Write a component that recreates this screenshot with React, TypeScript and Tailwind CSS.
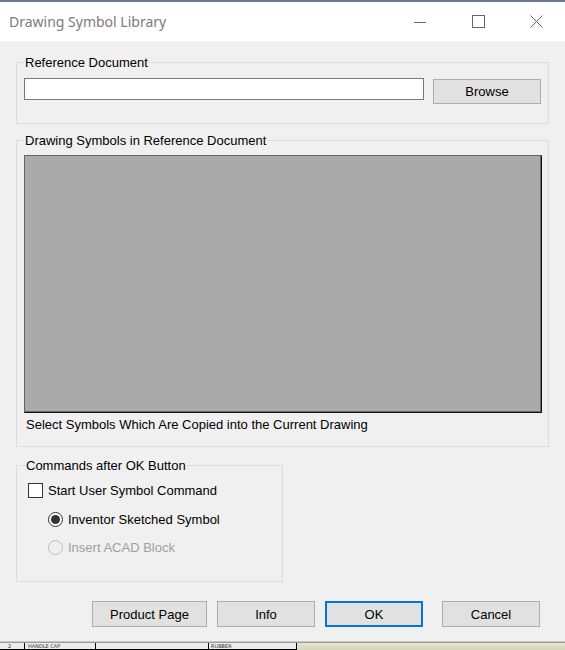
import React from 'react'

function Radio({ checked, disabled }: { checked?: boolean; disabled?: boolean }) {
  return (
    <span
      className={
        'w-[15px] h-[15px] rounded-full border flex items-center justify-center shrink-0 ' +
        (disabled ? 'border-[#bcbcbc] bg-[#f0f0f0]' : 'border-[#333333] bg-white')
      }
    >
      {checked && <span className="w-[9px] h-[9px] rounded-full bg-[#333333]" />}
    </span>
  )
}

function WinButton({ label, width, primary }: { label: string; width: string; primary?: boolean }) {
  return (
    <button
      className={
        'h-[26px] bg-[#e1e1e1] text-black leading-none ' +
        width +
        (primary ? ' border-2 border-[#0078d7]' : ' border border-[#adadad]')
      }
    >
      {label}
    </button>
  )
}

export default function App() {
  return (
    <div className="w-[565px] h-[650px] flex flex-col bg-[#f0f0f0] font-['Liberation_Sans',Arial,sans-serif] text-[13px] text-black overflow-hidden">
      {/* window top edge */}
      <div className="h-[2px] bg-[#6b7890]" />

      {/* title bar */}
      <div className="h-[39px] bg-white flex items-center">
        <div className="flex-1 pl-[9px] text-[14px] text-[#7b7b7b] font-['Noto_Sans','Open_Sans',sans-serif]">
          Drawing Symbol Library
        </div>
        <div className="w-[58px] h-full flex items-center justify-center">
          <svg width="12" height="12" viewBox="0 0 12 12">
            <path d="M0 6.5h12" stroke="#666" strokeWidth="1" />
          </svg>
        </div>
        <div className="w-[58px] h-full flex items-center justify-center">
          <svg width="13" height="13" viewBox="0 0 13 13">
            <rect x="0.5" y="0.5" width="12" height="12" fill="none" stroke="#666" strokeWidth="1" />
          </svg>
        </div>
        <div className="w-[58px] h-full flex items-center justify-center">
          <svg width="13" height="13" viewBox="0 0 13 13">
            <path d="M0.5 0.5L12.5 12.5M12.5 0.5L0.5 12.5" stroke="#666" strokeWidth="1" />
          </svg>
        </div>
      </div>

      {/* dialog body */}
      <div className="flex-1 px-[16px] pt-[12px]">
        <fieldset className="w-[533px] border border-[#dcdcdc] pl-[7px] pr-[7px] pt-[7px] pb-[19px]">
          <legend className="px-[1px] pt-[2px] leading-[16px]">Reference Document</legend>
          <div className="flex items-start">
            <div className="w-[400px] h-[22px] border border-[#7a7a7a] bg-white" />
            <div className="ml-[9px] mt-[1px]">
              <button className="w-[108px] h-[25px] bg-[#e1e1e1] border border-[#adadad]">Browse</button>
            </div>
          </div>
        </fieldset>

        <fieldset className="mt-[7px] w-[533px] border border-[#dcdcdc] pl-[7px] pr-[6px] pt-[6px] pb-[13px]">
          <legend className="px-[1px] pt-[2px] leading-[16px]">Drawing Symbols in Reference Document</legend>
          <div className="w-[518px] h-[258px] bg-[#aaaaaa] border border-t-[#646464] border-l-[#646464] border-r-[#111111] border-b-[#111111] shadow-[inset_-1px_-1px_0_#666]" />
          <div className="mt-[4px] pl-[2px] leading-[16px]">Select Symbols Which Are Copied into the Current Drawing</div>
        </fieldset>

        <fieldset className="mt-[9px] w-[267px] border border-[#dcdcdc] pl-[11px] pt-[9px] pb-[26px]">
          <legend className="ml-[-3px] px-[1px] pt-[2px] leading-[16px]">Commands after OK Button</legend>
          <div className="flex items-center h-[15px]">
            <span className="w-[15px] h-[15px] border border-[#333333] bg-white shrink-0" />
            <span className="ml-[5px] leading-[15px]">Start User Symbol Command</span>
          </div>
          <div className="flex items-center h-[15px] mt-[14px] ml-[20px]">
            <Radio checked />
            <span className="ml-[5px] leading-[15px]">Inventor Sketched Symbol</span>
          </div>
          <div className="flex items-center h-[15px] mt-[13px] ml-[20px]">
            <Radio disabled />
            <span className="ml-[5px] leading-[15px] text-[#a0a0a0]">Insert ACAD Block</span>
          </div>
        </fieldset>

        <div className="mt-[19px] ml-[76px] flex items-start">
          <WinButton label="Product Page" width="w-[115px]" />
          <div className="ml-[10px]">
            <WinButton label="Info" width="w-[98px]" />
          </div>
          <div className="ml-[10px]">
            <WinButton label="OK" width="w-[98px]" primary />
          </div>
          <div className="ml-[19px]">
            <WinButton label="Cancel" width="w-[98px]" />
          </div>
        </div>
      </div>

      {/* background drawing peeking below the dialog */}
      <div className="h-[1px] bg-[#c8c8c8]" />
      <div className="h-[1px] bg-[#9a9a9a]" />
      <div className="h-[7px] flex">
        <div className="w-[297px] flex bg-[#ececec] border-b border-black text-[5px] leading-[6px] text-[#333] font-['DejaVu_Sans',sans-serif]">
          <div className="w-[25px] pl-[8px] border-r border-black">2</div>
          <div className="w-[71px] pl-[3px] border-r border-black">HANDLE CAP</div>
          <div className="w-[113px] border-r border-black" />
          <div className="flex-1 pl-[2px] border-r border-black">RUBBER</div>
        </div>
        <div className="flex-1 bg-gradient-to-b from-[#e6e6d2] to-[#d6d6bc]" />
      </div>
    </div>
  )
}
